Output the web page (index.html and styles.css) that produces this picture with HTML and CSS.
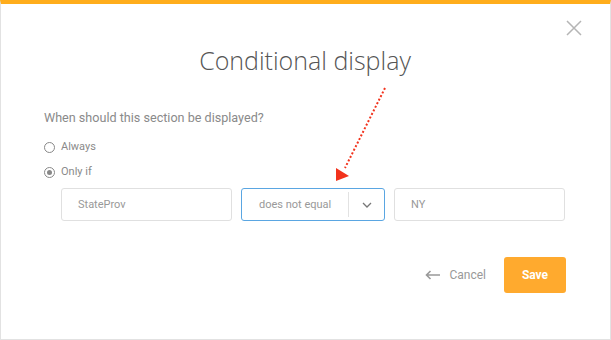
FILE: index.html
```html
<!DOCTYPE html>
<html lang="en">
<head>
  <meta charset="UTF-8" />
  <title>Conditional display</title>
  <link rel="stylesheet" href="styles.css">
</head>
<body>
  <div class="modal">
    <button class="close" aria-label="Close">
      <svg width="16" height="16" viewBox="0 0 16 16"><path d="M1 1L15 15M15 1L1 15" stroke="#b5b5b5" stroke-width="1.5" fill="none"/></svg>
    </button>

    <h1 class="title">Conditional display</h1>

    <p class="question">When should this section be displayed?</p>

    <div class="options">
      <label class="option"><span class="radio"></span>Always</label>
      <label class="option"><span class="radio checked"></span>Only if</label>
    </div>

    <div class="rule">
      <div class="field">StateProv</div>
      <div class="field select">
        <span class="select-value">does not equal</span>
        <span class="select-toggle">
          <svg width="10" height="6" viewBox="0 0 10 6"><path d="M1 1L5 5L9 1" stroke="#777" stroke-width="1.3" fill="none"/></svg>
        </span>
      </div>
      <div class="field">NY</div>
    </div>

    <div class="actions">
      <button class="cancel">
        <svg width="15" height="10" viewBox="0 0 15 10"><path d="M15 5H2M5.5 1L1.5 5L5.5 9" stroke="#999" stroke-width="1.6" fill="none"/></svg>
        Cancel
      </button>
      <button class="save">Save</button>
    </div>

    <svg class="pointer" width="611" height="340" viewBox="0 0 611 340">
      <line x1="385" y1="88" x2="345" y2="168" stroke="#f2321c" stroke-width="2" stroke-dasharray="2 2"/>
      <polygon points="336,168 349,176 336,181" fill="#f2321c"/>
    </svg>
  </div>
</body>
</html>
```

FILE: styles.css
```css
* {
  box-sizing: border-box;
}

body {
  margin: 0;
  background: #fff;
  font-family: Roboto, 'Liberation Sans', sans-serif;
}

.modal {
  position: relative;
  width: 611px;
  height: 340px;
  border: 1px solid #e2e2e2;
  border-top: 4px solid #ffad1c;
  padding: 0 44px 0 43px;
}

.close {
  position: absolute;
  top: 16px;
  right: 28px;
  padding: 0;
  border: none;
  background: none;
}

.title {
  margin: 0;
  padding-top: 37px;
  text-align: center;
  font-family: 'Open Sans', sans-serif;
  font-weight: 300;
  font-size: 25px;
  line-height: 38px;
  color: #555;
}

.question {
  margin: 29px 0 0;
  font-size: 12.6px;
  line-height: 20px;
  color: #8a8a8a;
}

.options {
  display: flex;
  flex-direction: column;
  gap: 5px;
  margin-top: 9px;
}

.option {
  display: flex;
  align-items: center;
  gap: 6px;
  font-size: 11px;
  line-height: 20px;
  color: #8a8a8a;
}

.radio {
  width: 11px;
  height: 11px;
  border: 1px solid #888;
  border-radius: 50%;
  display: flex;
  align-items: center;
  justify-content: center;
}

.radio.checked::after {
  content: '';
  width: 5px;
  height: 5px;
  border-radius: 50%;
  background: #888;
}

.rule {
  display: flex;
  gap: 9px;
  margin: 6px 0 0 17px;
}

.field {
  width: 171px;
  height: 33px;
  border: 1px solid #e0e0e0;
  border-radius: 3px;
  padding: 0 16px;
  display: flex;
  align-items: center;
  font-size: 11px;
  color: #999;
}

.select {
  width: 144px;
  padding: 0;
  border-color: #5aa6e2;
}

.select-value {
  flex: 1;
  padding-left: 17px;
}

.select-toggle {
  width: 36px;
  height: 25px;
  border-left: 1px solid #e2e2e2;
  display: flex;
  align-items: center;
  justify-content: center;
}

.actions {
  display: flex;
  justify-content: flex-end;
  align-items: center;
  gap: 18px;
  margin-top: 36px;
}

.cancel {
  display: flex;
  align-items: center;
  gap: 9px;
  padding: 0;
  border: none;
  background: none;
  font-family: Roboto, sans-serif;
  font-size: 12px;
  color: #999;
}

.save {
  width: 62px;
  height: 36px;
  border: none;
  border-radius: 3px;
  background: #ffaa2e;
  color: #fff;
  font-family: Roboto, sans-serif;
  font-size: 12px;
  font-weight: 700;
}

.pointer {
  position: absolute;
  top: -4px;
  left: -1px;
  pointer-events: none;
}
```
